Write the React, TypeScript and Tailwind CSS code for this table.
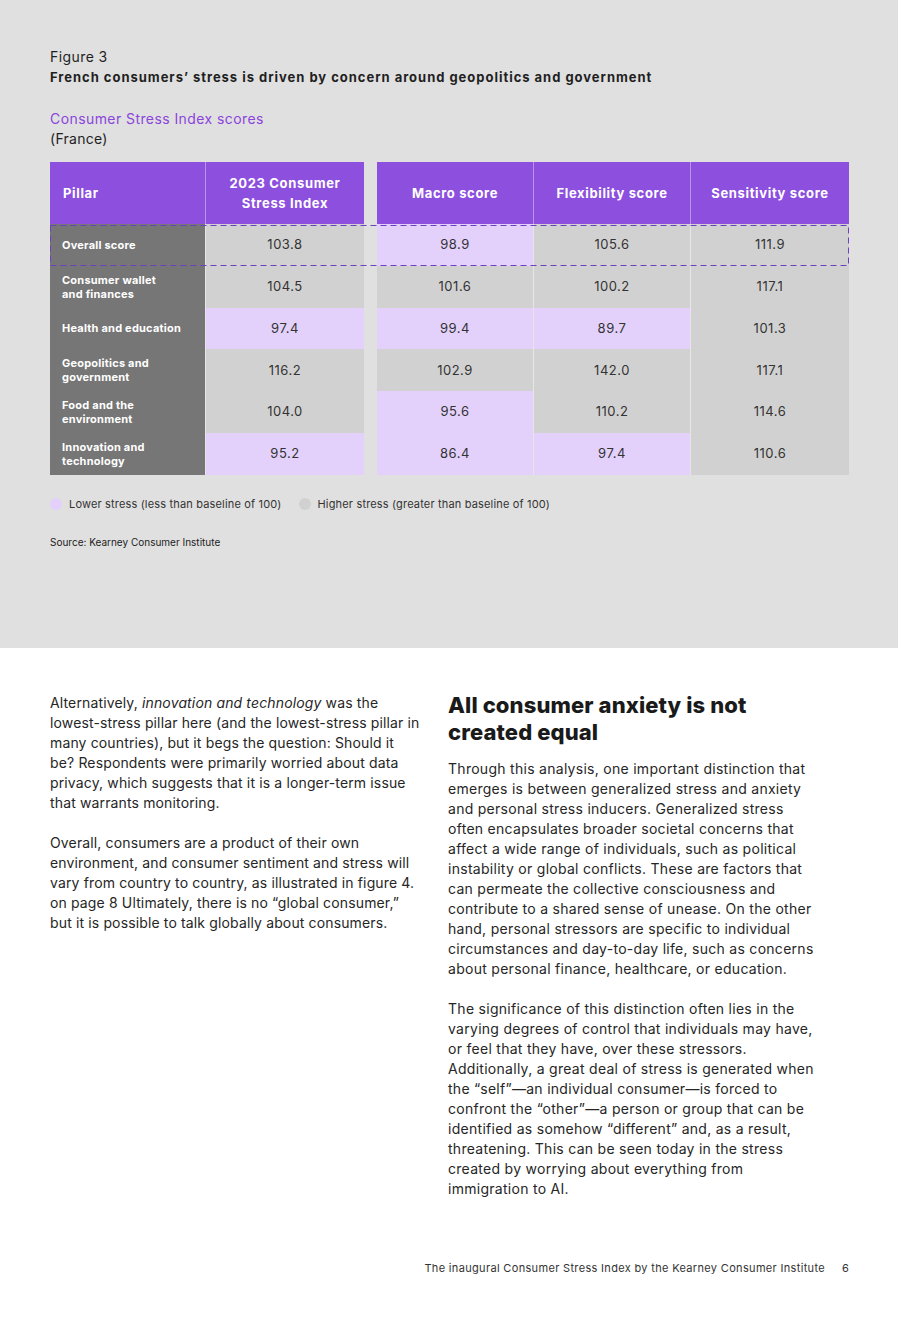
import React from 'react';

type Cell = { v: string; low: boolean };

const rows: { label: React.ReactNode; cells: Cell[] }[] = [
    { label: 'Overall score', cells: [{ v: '103.8', low: false }, { v: '98.9', low: true }, { v: '105.6', low: false }, { v: '111.9', low: false }] },
    { label: <>Consumer wallet<br />and finances</>, cells: [{ v: '104.5', low: false }, { v: '101.6', low: false }, { v: '100.2', low: false }, { v: '117.1', low: false }] },
    { label: 'Health and education', cells: [{ v: '97.4', low: true }, { v: '99.4', low: true }, { v: '89.7', low: true }, { v: '101.3', low: false }] },
    { label: <>Geopolitics and<br />government</>, cells: [{ v: '116.2', low: false }, { v: '102.9', low: false }, { v: '142.0', low: false }, { v: '117.1', low: false }] },
    { label: <>Food and the<br />environment</>, cells: [{ v: '104.0', low: false }, { v: '95.6', low: true }, { v: '110.2', low: false }, { v: '114.6', low: false }] },
    { label: <>Innovation and<br />technology</>, cells: [{ v: '95.2', low: true }, { v: '86.4', low: true }, { v: '97.4', low: true }, { v: '110.6', low: false }] },
];

const cols = 'grid grid-cols-[156px_158px_13px_157px_157px_158px]';

const NumCell: React.FC<{ c: Cell; last?: boolean }> = ({ c, last }) => (
    <div className={`flex items-center justify-center text-[13px] text-[#333] tracking-[0.04em] ${c.low ? 'bg-[#e3d1fb]' : 'bg-[#d1d1d1]'} ${last ? '' : 'border-r border-[#e6e6e6]'}`}>
        {c.v}
    </div>
);

const StressTable: React.FC = () => (
    <div className="mt-[13px] w-[799px]">
        {/* header */}
        <div className={`${cols} h-[62px] text-white font-bold text-[13px] tracking-[0.05em] leading-[20px]`}>
            <div className="bg-[#8d4fde] border-r border-[#b993ee] flex items-center pl-[13px]">Pillar</div>
            <div className="bg-[#8d4fde] flex items-center justify-center text-center">2023 Consumer<br />Stress Index</div>
            <div />
            <div className="bg-[#8d4fde] border-r border-[#b993ee] flex items-center justify-center">Macro score</div>
            <div className="bg-[#8d4fde] border-r border-[#b993ee] flex items-center justify-center">Flexibility score</div>
            <div className="bg-[#8d4fde] flex items-center justify-center">Sensitivity score</div>
        </div>
        {rows.map((r, i) => (
            <div key={i} className={`${cols} h-[41.8px] relative`}>
                <div className="bg-[#767676] text-white font-bold text-[11px] leading-[14px] tracking-[0.02em] flex items-center pl-[12px] border-r border-[#e6e6e6]">
                    {r.label}
                </div>
                <NumCell c={r.cells[0]} last />
                <div />
                <NumCell c={r.cells[1]} />
                <NumCell c={r.cells[2]} />
                <NumCell c={r.cells[3]} last />
                {i === 0 && (
                    <svg className="absolute inset-0 w-full h-full pointer-events-none" preserveAspectRatio="none">
                        <rect x="0.5" y="1.5" width="798" height="40" fill="none" stroke="#6e3fc0" strokeWidth="1" strokeDasharray="6 4" />
                    </svg>
                )}
            </div>
        ))}
    </div>
);

// lines as laid out in the report
const Lines: React.FC<{ lines: React.ReactNode[] }> = ({ lines }) => (
    <p>
        {lines.map((l, i) => (
            <span key={i} className="block whitespace-nowrap">{l}</span>
        ))}
    </p>
);

const App: React.FC = () => {
    return (
        <div className="w-[898px] min-h-[1323px] bg-white text-[#1f1f1f] font-['Inter','Liberation_Sans',sans-serif]">
            {/* Figure panel */}
            <div className="bg-[#e0e0e0] pt-[47px] pb-[99px] px-[50px]">
                <p className="text-[14px] leading-[20px] tracking-[0.03em]">Figure 3</p>
                <p className="text-[13px] leading-[20px] font-bold tracking-[0.075em] whitespace-nowrap">French consumers’ stress is driven by concern around geopolitics and government</p>
                <p className="mt-[22px] text-[14px] leading-[20px] text-[#8b45db] tracking-[0.03em]">Consumer Stress Index scores</p>
                <p className="text-[14px] leading-[20px] tracking-[0.02em]">(France)</p>

                <StressTable />

                <div className="mt-[21px] flex items-center text-[11px] leading-[16px] text-[#333] tracking-[0.015em]">
                    <span className="w-[12px] h-[12px] rounded-full bg-[#e3d1fb] mr-[7px]" />
                    <span>Lower stress (less than baseline of 100)</span>
                    <span className="w-[12px] h-[12px] rounded-full bg-[#d1d1d1] ml-[17px] mr-[7px]" />
                    <span>Higher stress (greater than baseline of 100)</span>
                </div>
                <p className="mt-[23px] text-[10px] leading-[14px] text-[#222]">Source: Kearney Consumer Institute</p>
            </div>

            {/* Body text */}
            <div className="px-[50px] pt-[44px] grid grid-cols-[376px_400px] gap-x-[22px] text-[14px] leading-[20px] tracking-[0.02em] text-[#262626]">
                <div className="pt-[1px] space-y-[20px] tracking-[0.01em]">
                    <Lines lines={[
                        <>Alternatively, <em>innovation and technology</em> was the</>,
                        'lowest-stress pillar here (and the lowest-stress pillar in',
                        'many countries), but it begs the question: Should it',
                        'be? Respondents were primarily worried about data',
                        'privacy, which suggests that it is a longer-term issue',
                        'that warrants monitoring.',
                    ]} />
                    <Lines lines={[
                        'Overall, consumers are a product of their own',
                        'environment, and consumer sentiment and stress will',
                        'vary from country to country, as illustrated in figure 4.',
                        'on page 8 Ultimately, there is no “global consumer,”',
                        'but it is possible to talk globally about consumers.',
                    ]} />
                </div>
                <div>
                    <h2 className="text-[22px] leading-[27px] font-extrabold tracking-[0.005em] text-[#1a1a1a]">All consumer anxiety is not<br />created equal</h2>
                    <div className="mt-[13px] space-y-[20px]">
                        <Lines lines={[
                            'Through this analysis, one important distinction that',
                            'emerges is between generalized stress and anxiety',
                            'and personal stress inducers. Generalized stress',
                            'often encapsulates broader societal concerns that',
                            'affect a wide range of individuals, such as political',
                            'instability or global conflicts. These are factors that',
                            'can permeate the collective consciousness and',
                            'contribute to a shared sense of unease. On the other',
                            'hand, personal stressors are specific to individual',
                            'circumstances and day-to-day life, such as concerns',
                            'about personal finance, healthcare, or education.',
                        ]} />
                        <Lines lines={[
                            'The significance of this distinction often lies in the',
                            'varying degrees of control that individuals may have,',
                            'or feel that they have, over these stressors.',
                            'Additionally, a great deal of stress is generated when',
                            'the “self”—an individual consumer—is forced to',
                            'confront the “other”—a person or group that can be',
                            'identified as somehow “different” and, as a result,',
                            'threatening. This can be seen today in the stress',
                            'created by worrying about everything from',
                            'immigration to AI.',
                        ]} />
                    </div>
                </div>
            </div>

            {/* Footer */}
            <div className="mt-[61px] px-[50px] flex justify-end items-center text-[11px] leading-[16px] text-[#333] tracking-[0.03em]">
                <span>The inaugural Consumer Stress Index by the Kearney Consumer Institute</span>
                <span className="ml-[17px] w-[6px] text-right">6</span>
            </div>
        </div>
    );
};

export default App;
